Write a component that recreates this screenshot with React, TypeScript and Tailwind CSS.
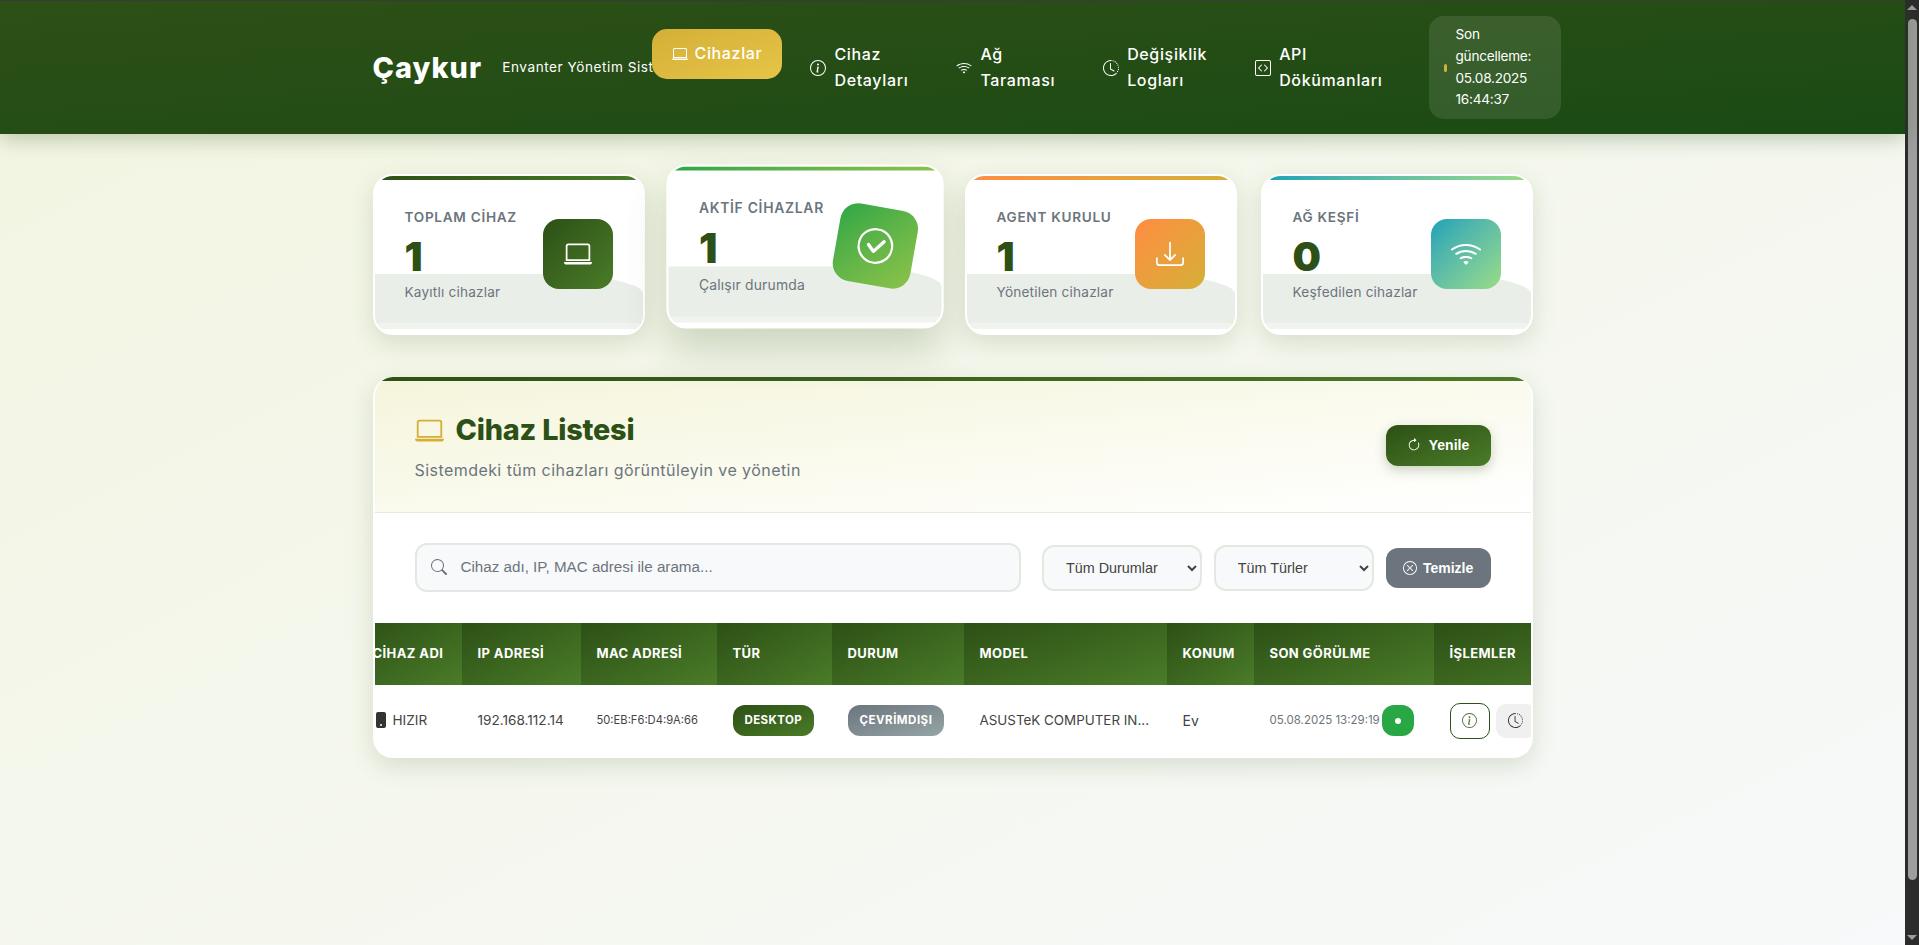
import {
  BsArrowClockwise,
  BsCheckCircle,
  BsClockHistory,
  BsCodeSquare,
  BsDownload,
  BsInfoCircle,
  BsLaptop,
  BsPhoneFill,
  BsSearch,
  BsWifi,
  BsXCircle,
} from "react-icons/bs";

const font = "font-['Inter','Liberation_Sans',sans-serif]";
const arial = "font-['Liberation_Sans',Arial,sans-serif]";

const navItems = [
  { icon: <BsInfoCircle className="w-4 h-4 shrink-0" />, lines: ["Cihaz", "Detayları"] },
  { icon: <BsWifi className="w-4 h-4 shrink-0" />, lines: ["Ağ", "Taraması"] },
  { icon: <BsClockHistory className="w-4 h-4 shrink-0" />, lines: ["Değişiklik", "Logları"] },
  { icon: <BsCodeSquare className="w-4 h-4 shrink-0" />, lines: ["API", "Dökümanları"] },
];

const Header = () => (
  <header className="h-[133px] bg-gradient-to-br from-[#2d5016] to-[#1a4a14] shadow-[0_4px_20px_rgba(45,80,22,0.3)] relative z-20">
    <div className="w-[1160px] mx-auto h-full flex items-center text-white whitespace-nowrap">
      <div className="w-[279px] shrink-0 flex items-center">
        <span className="text-[28.8px] font-extrabold tracking-[1.1px]">Çaykur</span>
        <span className="ml-[20px] text-[13.6px] tracking-[0.55px]">Envanter Yönetim Sistemi</span>
      </div>
      <nav className="relative z-10 mt-[1px] flex items-center gap-[8px] text-[16px] font-medium leading-[25.6px] tracking-[0.65px]">
        <a className="flex items-center gap-[7px] h-[50px] -mt-[29px] px-[20px] rounded-[15px] bg-gradient-to-br from-[#d4af37] to-[#e6c547]">
          <BsLaptop className="w-4 h-4" />
          Cihazlar
        </a>
        {navItems.map((item) => (
          <a key={item.lines[0]} className="flex items-center gap-[8px] px-[20px]">
            {item.icon}
            <span>
              {item.lines[0]}
              <br />
              {item.lines[1]}
            </span>
          </a>
        ))}
      </nav>
      <div className="shrink-0 ml-[26px] w-[132px] h-[103px] rounded-[15px] bg-white/10 flex items-center pl-[15px] gap-[9px] text-[13.6px] leading-[21.8px] tracking-[-0.25px]">
        <span className="w-[3px] h-[8px] rounded-full bg-[#d4af37]" />
        <span>
          Son
          <br />
          güncelleme:
          <br />
          05.08.2025
          <br />
          16:44:37
        </span>
      </div>
    </div>
  </header>
);

const stats = [
  {
    title: "TOPLAM CİHAZ",
    value: "1",
    sub: "Kayıtlı cihazlar",
    stripe: "bg-gradient-to-r from-[#2d5016] to-[#4a7c28]",
    box: "bg-gradient-to-br from-[#2d5016] to-[#4a7c28]",
    icon: <BsLaptop className="w-[28px] h-[28px]" />,
    active: false,
  },
  {
    title: "AKTİF CİHAZLAR",
    value: "1",
    sub: "Çalışır durumda",
    stripe: "bg-gradient-to-r from-[#28a745] to-[#8bc34a]",
    box: "bg-gradient-to-br from-[#28a745] to-[#8bc34a]",
    icon: <BsCheckCircle className="w-[32px] h-[32px]" />,
    active: true,
  },
  {
    title: "AGENT KURULU",
    value: "1",
    sub: "Yönetilen cihazlar",
    stripe: "bg-gradient-to-r from-[#ff8c42] to-[#d4af37]",
    box: "bg-gradient-to-br from-[#ff8c42] to-[#d4af37]",
    icon: <BsDownload className="w-[28px] h-[28px]" />,
    active: false,
  },
  {
    title: "AĞ KEŞFİ",
    value: "0",
    sub: "Keşfedilen cihazlar",
    stripe: "bg-gradient-to-r from-[#17a2b8] to-[#98dc86]",
    box: "bg-gradient-to-br from-[#17a2b8] to-[#98dc86]",
    icon: <BsWifi className="w-[32px] h-[32px]" />,
    active: false,
  },
];

const StatCard = ({ stat }: { stat: (typeof stats)[number] }) => (
  <div
    className={
      "relative h-[161px] bg-white border-2 border-white rounded-[20px] overflow-hidden " +
      (stat.active
        ? "-translate-y-[8px] scale-[1.02] shadow-[0_20px_40px_rgba(45,80,22,0.2)] border-[#f0f2ee]"
        : "shadow-[0_8px_25px_rgba(45,80,22,0.15)]")
    }
  >
    <div className={"absolute top-0 left-0 right-0 h-[4px] " + stat.stripe} />
    <div className="absolute left-0 right-0 bottom-[8px] h-[51px] bg-[#e9eee8] rounded-tr-[100px_20px]" />
    <div className="absolute left-0 right-0 bottom-[4px] h-[6px] bg-[#f0f3ee]" />
    <div className="relative flex items-center h-full pl-[30px] pr-[31px]">
      <div className="flex-1">
        <div className="-mt-[1px] text-[13.6px] font-semibold tracking-[0.7px] text-[#6c757d] leading-[22px]">{stat.title}</div>
        <div className="text-[40px] font-black text-[#2d5016] leading-[48px] mt-[5px]">{stat.value}</div>
        <div className="text-[13.6px] tracking-[0.2px] text-[#6c757d] leading-[22px]">{stat.sub}</div>
      </div>
      <div
        className={
          "w-[70px] h-[70px] -mt-[2px] rounded-[16px] flex items-center justify-center text-white -mr-[1px] " +
          stat.box +
          (stat.active ? " rotate-[10deg] scale-[1.1]" : "")
        }
      >
        {stat.icon}
      </div>
    </div>
  </div>
);

const Th = ({ children, w }: { children: React.ReactNode; w: number }) => (
  <th
    style={{ width: w }}
    className="h-[62px] px-[16px] text-left text-[13px] font-bold tracking-[0.4px] text-white whitespace-nowrap bg-gradient-to-br from-[#2d5016] to-[#4a7c28]"
  >
    {children}
  </th>
);

const Table = () => (
  <div className="overflow-hidden">
    <table className={"table-fixed border-collapse -ml-[18px] w-[1290px] " + font}>
      <thead>
        <tr>
          <Th w={105}>CİHAZ ADI</Th>
          <Th w={119}>IP ADRESİ</Th>
          <Th w={136}>MAC ADRESİ</Th>
          <Th w={115}>TÜR</Th>
          <Th w={132}>DURUM</Th>
          <Th w={203}>MODEL</Th>
          <Th w={87}>KONUM</Th>
          <Th w={180}>SON GÖRÜLME</Th>
          <Th w={213}>İŞLEMLER</Th>
        </tr>
      </thead>
      <tbody>
        <tr className="h-[71px] text-[13.6px] text-[#444]">
          <td className="px-[16px]">
            <span className="flex items-center gap-[4px]">
              <BsPhoneFill className="w-[16px] h-[16px] text-[#333]" />
              HIZIR
            </span>
          </td>
          <td className="px-[16px] text-[13.6px]">192.168.112.14</td>
          <td className="px-[16px] text-[11.2px]">50:EB:F6:D4:9A:66</td>
          <td className="px-[16px]">
            <span className="inline-flex items-center h-[31px] px-[12px] rounded-[12px] bg-gradient-to-br from-[#2d5016] to-[#4a7c28] text-white text-[11.5px] font-bold tracking-[0.4px]">
              DESKTOP
            </span>
          </td>
          <td className="px-[16px]">
            <span className="inline-flex items-center h-[31px] px-[12px] rounded-[12px] bg-gradient-to-br from-[#6c757d] to-[#95a5a6] text-white text-[11.5px] font-bold tracking-[0.5px] whitespace-nowrap">
              ÇEVRİMDIŞI
            </span>
          </td>
          <td className="px-[16px] text-[13.4px] whitespace-nowrap">ASUSTeK COMPUTER IN...</td>
          <td className="px-[16px] text-[14px]">Ev</td>
          <td className="pl-[16px]">
            <span className="flex items-center whitespace-nowrap text-[11.5px] text-[#6c757d]">
              05.08.2025 13:29:19
              <span className="inline-flex items-center justify-center w-[32px] h-[31px] rounded-[12px] bg-[#28a745] ml-[2px] shrink-0">
                <span className="w-[6px] h-[6px] rounded-full bg-white" />
              </span>
            </span>
          </td>
          <td className="pl-[16px]">
            <span className="flex items-center gap-[6px]">
              <span className="w-[40px] h-[36px] rounded-[10px] border border-[#2d5016] bg-white flex items-center justify-center text-[#55713f]">
                <BsInfoCircle className="w-[15px] h-[15px]" />
              </span>
              <span className="w-[40px] h-[34px] rounded-[10px] bg-[#f0f0f0] flex items-center justify-center text-[#333]">
                <BsClockHistory className="w-[15px] h-[15px]" />
              </span>
            </span>
          </td>
        </tr>
      </tbody>
    </table>
  </div>
);

const DeviceList = () => (
  <section className="mt-[42px] bg-white border-2 border-t-0 border-white rounded-[20px] overflow-hidden shadow-[0_8px_25px_rgba(45,80,22,0.15)]">
    <div className="h-[4px] bg-gradient-to-r from-[#2d5016] to-[#4a7c28]" />
    <div className="h-[132px] px-[40px] flex items-center justify-between border-b border-[#e8ebdc] bg-gradient-to-br from-[#f5f5dc] to-white">
      <div className="-mt-[2px]">
        <h2 className="flex items-center gap-[12px] text-[28.8px] font-extrabold tracking-[-0.2px] text-[#2d5016] leading-[44px]">
          <BsLaptop className="w-[29px] h-[29px] text-[#d4af37]" />
          Cihaz Listesi
        </h2>
        <p className="mt-[5px] text-[16px] tracking-[0.44px] text-[#6c757d] leading-[26px]">Sistemdeki tüm cihazları görüntüleyin ve yönetin</p>
      </div>
      <button className={"w-[105px] h-[41px] -mt-[3px] rounded-[12px] flex items-center justify-center gap-[8px] text-white text-[14px] font-bold shadow-[0_4px_12px_rgba(45,80,22,0.25)] bg-gradient-to-br from-[#2d5016] to-[#4a7c28] " + arial}>
        <BsArrowClockwise className="w-[14px] h-[14px]" />
        Yenile
      </button>
    </div>
    <div className={"h-[110px] px-[40px] flex items-center gap-[12px] " + arial}>
      <div className="relative w-[607px] h-[49px] mr-[9px] -mt-[2px] rounded-[12px] border-2 border-[#e3e8e3] bg-[#f8f9fa] flex items-center pl-[14px] gap-[14px] text-[15.2px] text-[#6c757d]">
        <BsSearch className="w-4 h-4" />
        Cihaz adı, IP, MAC adresi ile arama...
      </div>
      <select className="w-[160px] h-[46px] rounded-[12px] border-2 border-[#e3e8e3] bg-[#f8f9fa] pl-[18px] text-[14.4px] text-[#444]">
        <option>Tüm Durumlar</option>
      </select>
      <select className="w-[160px] h-[46px] rounded-[12px] border-2 border-[#e3e8e3] bg-[#f8f9fa] pl-[18px] text-[14.4px] text-[#444]">
        <option>Tüm Türler</option>
      </select>
      <button className="w-[105px] h-[40px] rounded-[12px] bg-[#6c757d] flex items-center justify-center gap-[6px] text-white text-[14px] font-bold">
        <BsXCircle className="w-[14px] h-[14px]" />
        Temizle
      </button>
    </div>
    <Table />
  </section>
);

const Scrollbar = () => (
  <div className="w-[14px] h-full shrink-0 bg-[#2c2c2c] flex flex-col items-center pt-[5px] pb-[5px]">
    <span className="w-0 h-0 border-x-[5px] border-x-transparent border-b-[5px] border-b-[#9e9e9e]" />
    <span className="mt-[9px] w-[9px] h-[861px] rounded-full bg-[#9e9e9e]" />
    <span className="mt-auto w-0 h-0 border-x-[5px] border-x-transparent border-t-[5px] border-t-[#9e9e9e]" />
  </div>
);

export default function App() {
  return (
    <div className={"w-[1919px] h-[945px] overflow-hidden flex " + font}>
      <div className="flex-1 h-full pt-[1px] bg-[#3a3a3a]">
        <div className="h-full bg-gradient-to-br from-[#f2f5e0] to-[#f7f9fa]">
          <Header />
          <main className="w-[1160px] mx-auto pt-[40px]">
            <div className="grid grid-cols-4 gap-[24px]">
              {stats.map((s) => (
                <StatCard key={s.title} stat={s} />
              ))}
            </div>
            <DeviceList />
          </main>
        </div>
      </div>
      <Scrollbar />
    </div>
  );
}
